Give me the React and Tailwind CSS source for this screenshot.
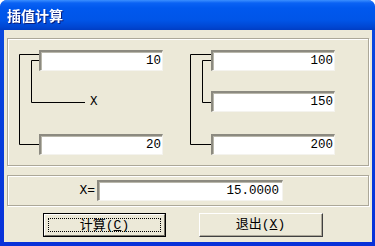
import React from "react";

const mono = { fontFamily: '"Liberation Mono", "Noto Sans CJK SC", monospace' };

function Field({ value, className = "" }) {
  return (
    <div
      className={`h-[21px] w-[124px] bg-white border-t-2 border-l-2 border-b border-r border-t-[#8c8a80] border-l-[#8c8a80] border-b-[#f4f3ee] border-r-[#f4f3ee] shadow-[inset_1px_1px_0_#b9b7ab] flex items-center justify-end pr-[1px] text-[12.5px] text-black leading-none ${className}`}
      style={mono}
    >
      {value}
    </div>
  );
}

function Bracket({ width }) {
  return (
    <svg width={width} height="105" className="shrink-0">
      <polyline
        points={`${width},4.5 0.5,4.5 0.5,94.5 ${width},94.5`}
        fill="none"
        stroke="#000"
        strokeWidth="1"
      />
      <polyline
        points={`${width},10.5 12.5,10.5 12.5,52.5 ${width},52.5`}
        fill="none"
        stroke="#000"
        strokeWidth="1"
      />
    </svg>
  );
}

export default function App() {
  return (
    <div className="w-[375px] h-[246px] flex flex-col bg-gradient-to-b from-[#0a4be0] to-[#0831d9] rounded-t-[7px] overflow-hidden">
      {/* title bar */}
      <div className="h-[30px] shrink-0 flex items-center pl-[7px] bg-[linear-gradient(to_bottom,#3b8fff_0px,#0a62f4_3px,#0058ee_8px,#0055e8_20px,#0046d2_27px,#003dc4_30px)]">
        <span
          className="text-white font-bold text-[14px] leading-none drop-shadow-[1px_1px_0_#0a1e80]"
          style={{ fontFamily: '"Noto Sans CJK SC", sans-serif' }}
        >
          插值计算
        </span>
      </div>

      {/* client area */}
      <div className="flex-1 ml-[4px] mr-[3px] mb-[4px] bg-[#ece9d8] flex flex-col pt-[8px]">
        {/* top group */}
        <div className="mx-[3px] h-[128px] border border-[#aca899] shadow-[inset_1px_1px_0_#fff,1px_1px_0_#fff] flex pt-[11px] pl-[11px]">
          <div className="flex">
            <Bracket width={20} />
            <div className="flex flex-col">
              <Field value="10" />
              <div className="h-[63px] flex items-start pt-[31px]">
                <div className="w-[46px] h-px bg-black" />
                <span className="ml-[5px] -mt-[7px] text-[12.5px] leading-[14px] text-black" style={mono}>
                  X
                </span>
              </div>
              <Field value="20" />
            </div>
          </div>
          <div className="flex ml-[27px]">
            <Bracket width={21} />
            <div className="flex flex-col">
              <Field value="100" />
              <Field value="150" className="mt-[20px]" />
              <Field value="200" className="mt-[22px]" />
            </div>
          </div>
        </div>

        {/* result group */}
        <div className="mx-[3px] mt-[9px] h-[31px] border border-[#aca899] shadow-[inset_1px_1px_0_#fff,1px_1px_0_#fff] flex pt-[4px]">
          <div className="w-[89px] flex justify-end items-center pr-[2px] h-[21px]">
            <span className="text-[13px] text-black leading-none" style={mono}>
              X=
            </span>
          </div>
          <Field value="15.0000" className="w-[186px] pr-[3px]" />
        </div>

        {/* buttons */}
        <div className="flex mt-[7px] ml-[39px] gap-[33px]">
          <button
            className="w-[123px] h-[24px] border border-black bg-[#ece9d8] p-0"
            style={{ fontFamily: '"Liberation Mono", "Noto Sans CJK SC", monospace' }}
          >
            <div className="w-full h-full border-t border-l border-t-white border-l-white border-b border-r border-b-[#716f64] border-r-[#716f64] p-[3px]">
              <div className="w-full h-full border border-dotted border-black flex items-center justify-center text-[13px] text-black leading-none">
                计算(<span className="underline">C</span>)
              </div>
            </div>
          </button>
          <button
            className="w-[124px] h-[24px] bg-[#ece9d8] border-t border-l border-t-white border-l-white border-b border-r border-b-[#404040] border-r-[#404040] p-0"
            style={mono}
          >
            <div className="w-full h-full border-b border-r border-b-[#aca899] border-r-[#aca899] flex items-center justify-center text-[13px] text-black leading-none">
              退出(<span className="underline">X</span>)
            </div>
          </button>
        </div>
      </div>
    </div>
  );
}
